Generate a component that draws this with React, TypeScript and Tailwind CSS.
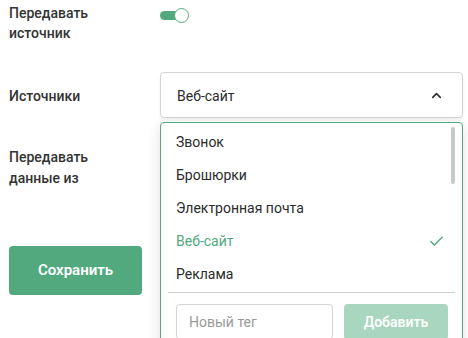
import { Check, ChevronUp } from "lucide-react"

const OPTIONS = ["Звонок", "Брошюрки", "Электронная почта", "Веб-сайт", "Реклама"]
const SELECTED = "Веб-сайт"

export default function App() {
  return (
    <div
      className="relative h-[338px] w-[468px] overflow-hidden bg-white pl-[9px] text-[#2b2b2b]"
      style={{ fontFamily: "Roboto, 'Noto Sans', sans-serif" }}
    >
      {/* Передавать источник */}
      <div className="flex pt-[3px]">
        <div className="w-[151px] text-[14px] font-medium leading-[20px] text-[#333]">
          Передавать
          <br />
          источник
        </div>
        <div className="relative mt-[5px] h-[15px] w-[29px]">
          <span className="absolute left-0 top-[3px] h-[9px] w-[22px] rounded-full bg-[#52a97e]" />
          <span className="absolute right-0 top-0 size-[15px] rounded-full border border-[#52a97e] bg-white" />
        </div>
      </div>

      {/* Источники */}
      <div className="mt-[29px] flex items-center">
        <div className="w-[151px] pt-[2px] text-[14px] font-medium text-[#333]">Источники</div>
        <div className="relative w-[303px]">
          <div className="flex h-[46px] items-center justify-between rounded-[4px] border border-[#d4d4d4] bg-white pl-[16px] pr-[18px] text-[14px] shadow-[0_2px_3px_rgba(0,0,0,0.06)]">
            <span className="pt-[2px]">Веб-сайт</span>
            <ChevronUp className="size-[15px]" strokeWidth={2.5} />
          </div>

          {/* Dropdown */}
          <div className="absolute left-0 right-0 top-[50px] z-10 h-[240px] rounded-[4px] border border-[#52a97e] bg-white shadow-[0_4px_14px_rgba(0,0,0,0.12)]">
            <span className="absolute right-[7px] top-[4px] h-[57px] w-[4px] rounded-full bg-[#c8c8c8]" />
            <ul className="pt-[3px]">
              {OPTIONS.map((o) => (
                <li
                  key={o}
                  className={`flex h-[33px] items-center justify-between pl-[15px] pr-[17px] text-[14px] ${
                    o === SELECTED ? "text-[#52a97e]" : "text-[#2b2b2b]"
                  }`}
                >
                  <span>{o}</span>
                  {o === SELECTED && <Check className="size-[17px] text-[#52a97e]" strokeWidth={2} />}
                </li>
              ))}
            </ul>
            <div className="mx-[7px] mt-[1px] border-t border-[#d0d0d0]" />
            <div className="flex gap-[11px] pl-[15px] pt-[11px]">
              <input
                placeholder="Новый тег"
                className="h-[36px] w-[157px] rounded-[4px] border border-[#d4d4d4] px-[12px] text-[14px] outline-none placeholder:text-[#9a9a9a]"
              />
              <button className="h-[36px] w-[104px] rounded-[4px] bg-[#a9d6be] text-[14px] font-semibold text-white">
                Добавить
              </button>
            </div>
          </div>
        </div>
      </div>

      {/* Передавать данные из */}
      <div className="mt-[29px] w-[151px] text-[14px] font-medium leading-[21px] text-[#333]">
        Передавать
        <br />
        данные из
      </div>

      <button className="mt-[57px] flex h-[49px] w-[133px] items-center justify-center rounded-[4px] bg-[#52a97e] text-[15px] font-semibold text-white">
        Сохранить
      </button>
    </div>
  )
}
